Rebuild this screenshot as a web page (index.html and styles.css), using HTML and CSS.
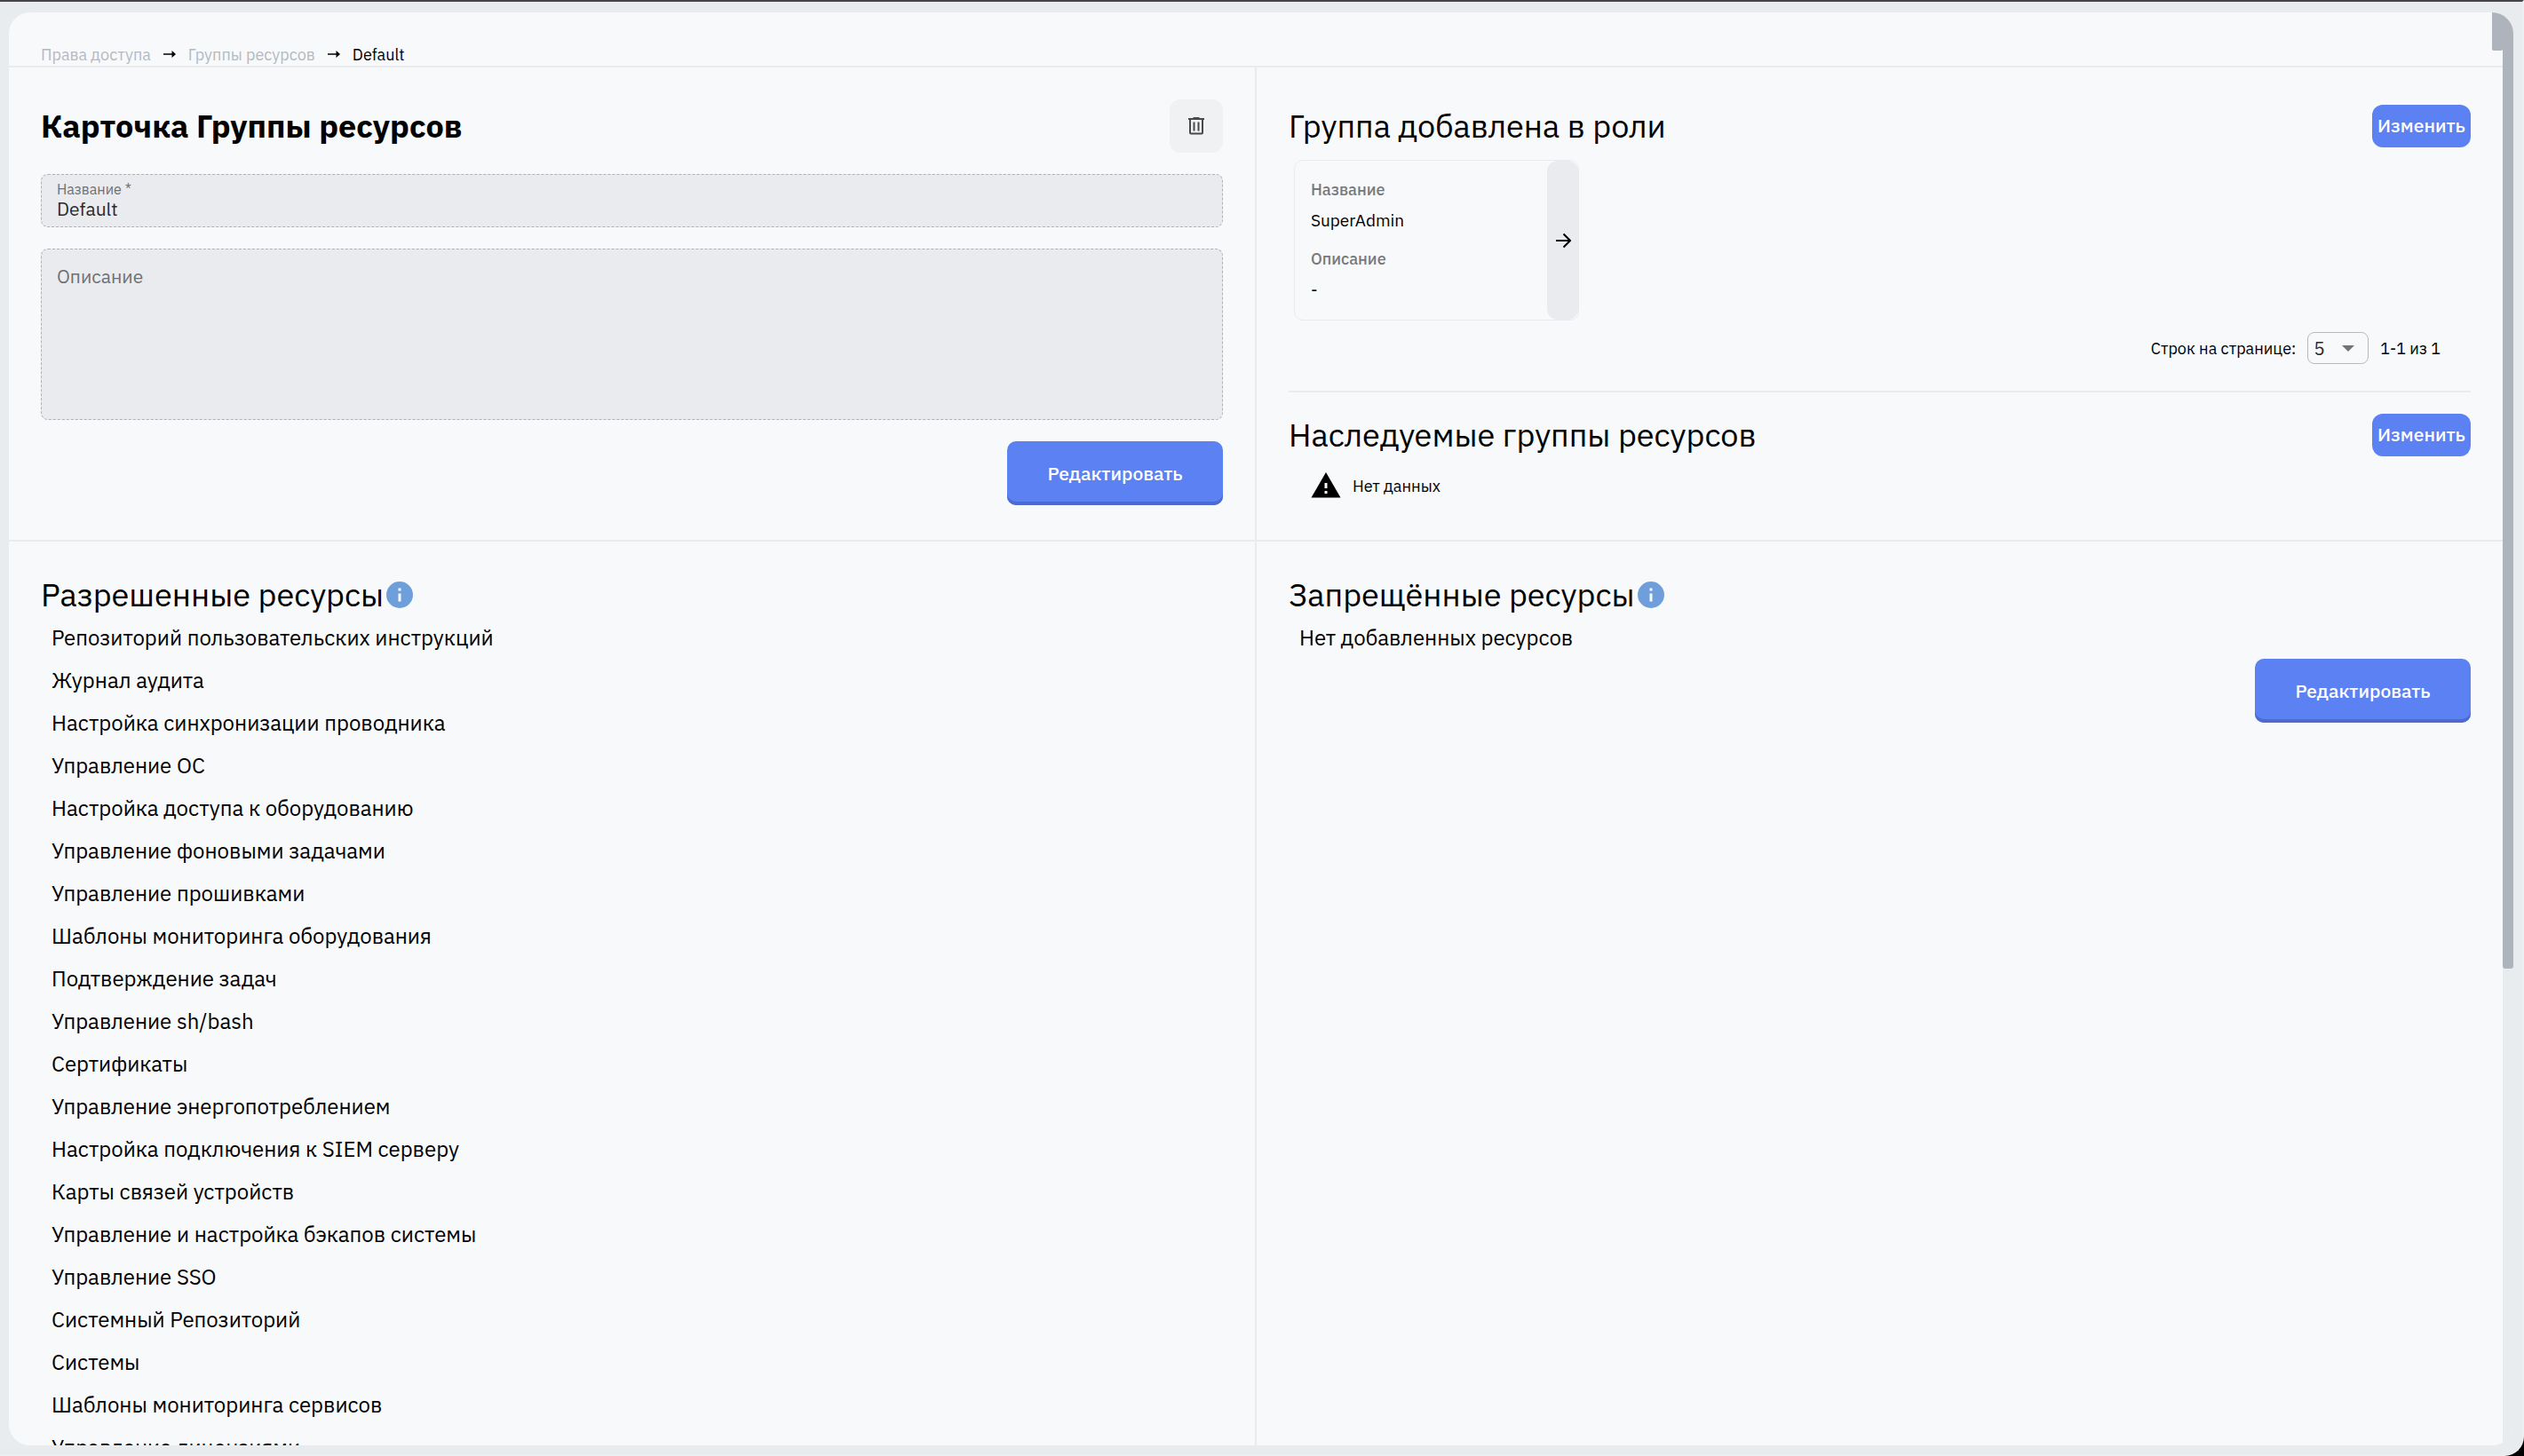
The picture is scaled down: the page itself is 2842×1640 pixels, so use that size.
FILE: index.html
```html
<!DOCTYPE html>
<html lang="ru">
<head>
<meta charset="utf-8">
<meta name="viewport" content="width=device-width, initial-scale=1">
<title>Карточка Группы ресурсов</title>
<link rel="stylesheet" href="styles.css">
</head>
<body>
<div class="window">
  <div class="panel">
    <main class="content">
      <header class="topbar">
        <nav class="breadcrumbs" aria-label="Навигация">
          <a class="crumb" href="#">Права доступа</a>
          <svg class="crumb-arrow" viewBox="0 0 14 10" aria-hidden="true"><path d="M0 4.200h9.500V1L14 5 9.500 9V5.800H0z"/></svg>
          <a class="crumb" href="#">Группы ресурсов</a>
          <svg class="crumb-arrow" viewBox="0 0 14 10" aria-hidden="true"><path d="M0 4.200h9.500V1L14 5 9.500 9V5.800H0z"/></svg>
          <span class="crumb-current">Default</span>
        </nav>
        <div class="topbar-scroll"></div>
      </header>
      <div class="grid">
        <section class="cell">
          <div class="row">
            <h1 class="title">Карточка Группы ресурсов</h1>
            <button class="icon-button" type="button" aria-label="Удалить">
              <svg class="trash" viewBox="0 0 18 20" aria-hidden="true"><path fill-rule="evenodd" d="M0 1h5.500V0h7v1H18v2h-1v14.500a2 2 0 0 1-2 2H3a2 2 0 0 1-2-2V3H0zM3 3v14.500h12V3zM5.500 5.500h2v10h-2zM10.500 5.500h2v10h-2z"/></svg>
            </button>
          </div>
          <div class="field">
            <label class="field-label" for="name">Название *</label>
            <input class="field-input" id="name" type="text" value="Default" readonly>
          </div>
          <textarea class="area" aria-label="Описание" placeholder="Описание" readonly></textarea>
          <button class="button" type="button">Редактировать</button>
        </section>
        <section class="cell">
          <div class="row">
            <h2 class="heading">Группа добавлена в роли</h2>
            <button class="small-button" type="button">Изменить</button>
          </div>
          <article class="card">
            <dl class="card-body">
              <dt>Название</dt>
              <dd>SuperAdmin</dd>
              <dt>Описание</dt>
              <dd>-</dd>
            </dl>
            <button class="card-open" type="button" aria-label="Открыть">
              <svg class="arrow" viewBox="0 0 18 18" aria-hidden="true"><path d="M1 9h15M9.500 1.500L17 9l-7.500 7.500"/></svg>
            </button>
          </article>
          <div class="pagination">
            <label for="rows">Строк на странице:</label>
            <span class="select-wrap">
              <select class="select" id="rows"><option>5</option></select>
              <svg class="caret" viewBox="0 0 14 7" aria-hidden="true"><path d="M0 0h14L7 7z"/></svg>
            </span>
            <span>1-1 из 1</span>
          </div>
          <hr class="divider">
          <div class="row">
            <h2 class="heading">Наследуемые группы ресурсов</h2>
            <button class="small-button" type="button">Изменить</button>
          </div>
          <p class="empty">
            <svg class="warning" viewBox="0 0 24 24" aria-hidden="true"><path d="M1 21h22L12 2 1 21zm12-3h-2v-2h2v2zm0-4h-2v-4h2v4z"/></svg>
            Нет данных
          </p>
        </section>
        <section class="cell">
          <div class="list-head">
            <h2 class="heading">Разрешенные ресурсы</h2>
            <svg class="info" viewBox="2 2 20 20" aria-hidden="true"><path d="M12 2a10 10 0 1 0 0 20 10 10 0 0 0 0-20zm1 15h-2v-6h2v6zm0-8h-2V7h2v2z"/></svg>
          </div>
          <ul class="list">
            <li>Репозиторий пользовательских инструкций</li>
            <li>Журнал аудита</li>
            <li>Настройка синхронизации проводника</li>
            <li>Управление ОС</li>
            <li>Настройка доступа к оборудованию</li>
            <li>Управление фоновыми задачами</li>
            <li>Управление прошивками</li>
            <li>Шаблоны мониторинга оборудования</li>
            <li>Подтверждение задач</li>
            <li>Управление sh/bash</li>
            <li>Сертификаты</li>
            <li>Управление энергопотреблением</li>
            <li>Настройка подключения к SIEM серверу</li>
            <li>Карты связей устройств</li>
            <li>Управление и настройка бэкапов системы</li>
            <li>Управление SSO</li>
            <li>Системный Репозиторий</li>
            <li>Системы</li>
            <li>Шаблоны мониторинга сервисов</li>
            <li>Управление лицензиями</li>
          </ul>
        </section>
        <section class="cell">
          <div class="list-head">
            <h2 class="heading">Запрещённые ресурсы</h2>
            <svg class="info" viewBox="2 2 20 20" aria-hidden="true"><path d="M12 2a10 10 0 1 0 0 20 10 10 0 0 0 0-20zm1 15h-2v-6h2v6zm0-8h-2V7h2v2z"/></svg>
          </div>
          <ul class="list">
            <li>Нет добавленных ресурсов</li>
          </ul>
          <button class="button button-flush" type="button">Редактировать</button>
        </section>
      </div>
    </main>
    <div class="scroll-track"><div class="scroll-thumb"></div></div>
  </div>
</div>
</body>
</html>
```

FILE: styles.css
```css
:root {
  --surface: #f8f9fb;
  --line: #eaebed;
  --blue: #5c81f2;
  --thumb: #adb4bc;
}

* {
  box-sizing: border-box;
}

body {
  margin: 0;
  background: #000;
  color: #000;
  font-family: "IBM Plex Sans", Roboto, sans-serif;
  font-size: 18px;
}

button,
input,
select,
textarea {
  margin: 0;
  font-family: inherit;
}

h1,
h2,
p,
ul,
dl,
dd {
  margin: 0;
  padding: 0;
}

.window {
  display: flex;
  height: 100vh;
  padding: 12px 10px 10px;
  background: #e8ecef;
  border: solid #eeeff1;
  border-width: 0 2px 2px 0;
  border-top: 2px solid #47454a;
  border-bottom-right-radius: 22px;
}

.panel {
  display: flex;
  flex: 1;
  overflow: hidden;
  background: var(--surface);
  border-radius: 24px;
}

.content {
  display: flex;
  flex: 1;
  flex-direction: column;
  min-width: 0;
}

.topbar {
  display: flex;
  flex: none;
  justify-content: space-between;
  height: 62px;
  padding-left: 36px;
  border-bottom: 2px solid var(--line);
}

.topbar-scroll {
  width: 12px;
  height: 43px;
  background: var(--thumb);
  border-radius: 0 0 2px 2px;
}

.breadcrumbs {
  display: flex;
  align-items: center;
  align-self: flex-end;
  gap: 14px;
  height: 26px;
}

.crumb {
  color: #b4bac2;
  text-decoration: none;
}

.crumb-arrow {
  width: 14px;
  height: 10px;
}

.grid {
  display: grid;
  flex: none;
  grid-template-columns: 1fr 1fr;
  gap: 2px;
  background: var(--line);
}

.cell {
  display: flex;
  flex-direction: column;
  min-width: 0;
  padding: 36px 36px 39px;
  background: var(--surface);
}

.row {
  display: flex;
  align-items: center;
  justify-content: space-between;
  height: 60px;
}

.title,
.heading {
  font-size: 36px;
  line-height: 48px;
}

.title {
  font-weight: 700;
}

.heading {
  font-weight: 400;
}

.icon-button {
  display: flex;
  align-items: center;
  justify-content: center;
  width: 60px;
  height: 60px;
  padding: 0;
  background: #f0f1f3;
  border: 0;
  border-radius: 12px;
}

.trash {
  width: 18px;
  height: 20px;
  fill: #48494b;
}

.field,
.area {
  margin-top: 24px;
  background: #eaebef;
  border: 1px dashed #b0b1b4;
  border-radius: 8px;
}

.field {
  display: flex;
  flex-direction: column;
  height: 60px;
  padding: 6px 17px;
}

.field-label {
  color: #6f7073;
  font-size: 16px;
  line-height: 20px;
}

.field-input {
  width: 100%;
  height: 24px;
  padding: 0;
  background: none;
  border: 0;
  color: #2a2a2c;
  font-size: 21px;
}

.area {
  display: block;
  width: 100%;
  height: 193px;
  padding: 16px 17px;
  color: #2a2a2c;
  font-size: 21px;
  line-height: 28px;
  resize: none;
}

.area::placeholder {
  color: #6f7073;
}

.button {
  align-self: flex-end;
  width: 243px;
  height: 72px;
  margin-top: 24px;
  padding: 0;
  background: var(--blue);
  border: 0;
  border-radius: 10px;
  box-shadow: inset 0 -4px #4c6bcf;
  color: #fff;
  font-size: 21px;
  font-weight: 500;
}

.button-flush {
  margin-top: 0;
}

.small-button {
  height: 48px;
  width: 111px;
  padding: 0 0 2px;
  background: var(--blue);
  border: 0;
  border-radius: 12px;
  color: #fff;
  font-size: 21px;
  font-weight: 500;
}

.card {
  display: flex;
  width: 321px;
  margin: 8px 0 0 6px;
  border: 1px solid var(--line);
  border-radius: 10px;
}

.card-body {
  flex: 1;
  padding: 15px 18px 18px;
}

.card-body dt {
  color: #77787a;
  font-weight: 500;
  line-height: 36px;
}

.card-body dd {
  font-size: 19px;
  line-height: 32px;
}

.card-body dd + dt {
  margin-top: 10px;
}

.card-open {
  display: flex;
  align-items: center;
  justify-content: center;
  width: 35px;
  padding: 0;
  background: #eaebee;
  border: 0;
  border-radius: 12px;
}

.arrow {
  width: 18px;
  height: 18px;
  fill: none;
  stroke: #000;
  stroke-width: 2;
}

.pagination {
  display: flex;
  align-items: center;
  justify-content: flex-end;
  gap: 13px;
  height: 36px;
  margin-top: 13px;
  padding-right: 34px;
}

.select-wrap {
  position: relative;
}

.select {
  display: block;
  width: 69px;
  height: 36px;
  padding: 0 6px;
  appearance: none;
  background: none;
  border: 1px solid #b9babd;
  border-radius: 8px;
  color: #2a2a2c;
  font-size: 21px;
}

.caret {
  position: absolute;
  top: 15px;
  right: 16px;
  width: 14px;
  height: 7px;
  fill: #727375;
  pointer-events: none;
}

.divider {
  width: 100%;
  height: 2px;
  margin: 30px 0 18px;
  background: var(--line);
  border: 0;
}

.empty {
  display: flex;
  align-items: center;
  gap: 12px;
  height: 36px;
  margin-top: 9px;
  padding-left: 24px;
}

.warning {
  width: 36px;
  height: 36px;
}

.list-head {
  display: flex;
  align-items: center;
  gap: 3px;
  height: 48px;
}

.info {
  width: 30px;
  height: 30px;
  fill: #6f9fdb;
}

.list {
  padding-left: 12px;
  font-size: 24px;
  line-height: 48px;
  list-style: none;
}

.scroll-track {
  width: 12px;
  background: #e8ecef;
}

.scroll-thumb {
  height: 66.7%;
  background: var(--thumb);
  border-radius: 0 0 3px 3px;
}
```
